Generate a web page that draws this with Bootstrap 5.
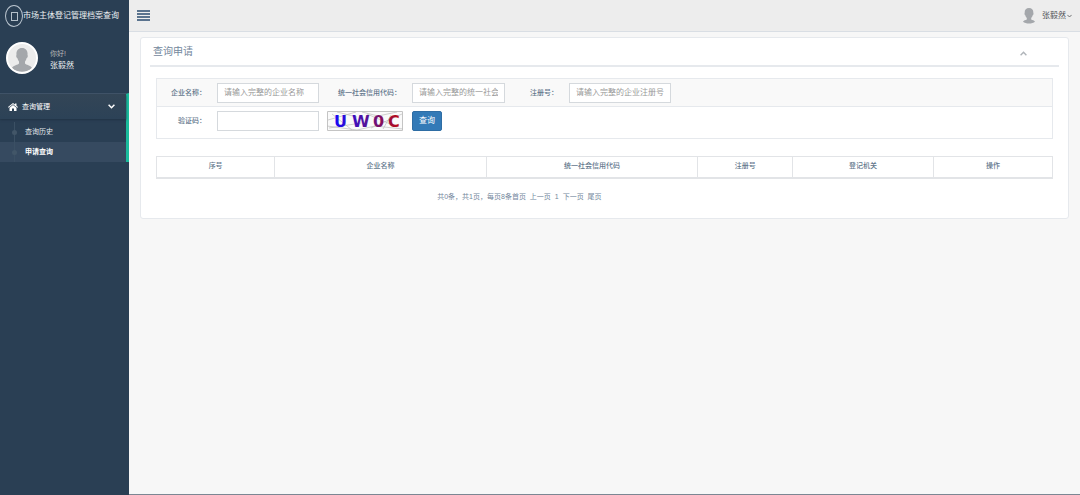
<!DOCTYPE html>
<html lang="zh-CN">
<head>
<meta charset="utf-8">
<meta name="viewport" content="width=device-width, initial-scale=1">
<title>市场主体登记管理档案查询</title>
<link href="https://cdn.jsdelivr.net/npm/bootstrap@5.3.0/dist/css/bootstrap.min.css" rel="stylesheet">
<style>
body{font-family:"Liberation Sans","Noto Sans CJK SC",sans-serif;font-size:7px;line-height:12px;color:#73879c;background:#f7f7f7}
a{color:inherit;text-decoration:none}
.side{width:129px;background:#2a3f54;color:#ecf0f1}
.brand{height:32px;font-size:8px;padding-left:5px;white-space:nowrap}
.logo-ring{width:18px;height:22px;border:1px solid #b9c4ce;border-radius:50%;flex:none}
.logo-ring span{width:7px;height:9px;border:1px solid #b4c0ca}
.profile{padding:10px 6px 0;height:61px;gap:12px}
.avatar{width:32px;height:32px;border-radius:50%;border:2px solid #fff;background:#ececec;flex:none}
.hello{color:#bab8b8}
.person{font-size:8px}
.who{padding-top:6px}
.menu-group{border-right:3px solid #1abb9c;border-top:1px solid #42566a}
.menu-head{height:25px;padding:0 11px 0 8px;background:linear-gradient(#334556,#2c4257);box-shadow:0 1px 2px #213345;color:#fff}
.sub{padding-top:3px}
.sub a{height:20px;padding-left:25px;position:relative;color:#e2e7eb}
.sub a::before{content:"";position:absolute;left:14px;top:0;bottom:0;border-left:1px solid #3b5064}
.sub a::after{content:"";position:absolute;left:12px;top:8px;width:5px;height:5px;border-radius:50%;background:#425668}
.sub a.active{background:#364a60;color:#fff;font-weight:bold}
.content-side{border-bottom:1px solid #7b8793}
.topbar{height:32px;background:#ededed;border-bottom:1px solid #d9dee4;padding:0 8px}
.plain-btn{background:none;border:0;padding:0;line-height:0}
.user-btn{background:none;border:0;padding:0;gap:1px;font-size:8px;color:#515356;line-height:12px}
.user-btn .face{margin-right:6px}
.panel{margin:5px 11px 0 11px;border:1px solid #e6e9ed;border-radius:3px;padding:0 9px 15px;background:#fff}
.panel-title{height:29px;border-bottom:2px solid #e6e9ed}
.panel-title h1{font-size:10px;line-height:14px;padding-left:3px}
.panel-main{padding:11px 6px 0}
.query{border:1px solid #e6e9ed}
.query-row{height:31px;padding-bottom:4px}
.query-row:first-child{height:28px;padding-bottom:0;background:#f9f9f9;border-bottom:1px solid #e6e9ed}
.query label{width:49px;text-align:right;margin-right:11px;font-weight:500;color:#63778c;white-space:nowrap}
.query label.l-code{width:82px}
.query label.l-reg{width:53px}
.query input{width:102px;height:20px;border:1px solid #d5d9dd;border-radius:0;padding:0 6px;font-size:8px;line-height:12px;color:#555}
.query input.in-code{width:93px}
.query input::placeholder{color:#999}
.captcha{margin:0 9px 0 8px}
.go{width:30px;height:20px;font-size:8px;line-height:12px;padding:0;border-radius:2px;background:#337ab7;border-color:#2e6da4;color:#fff}
.result{margin-top:17px;table-layout:fixed;border-color:#e2e4e7;color:#73879c}
.result th{height:21px;padding:0 0 2px;font-weight:500;text-align:center;vertical-align:middle;color:#63778c;border:1px solid #e2e4e7;border-bottom-width:2px}
.pages{margin-top:12px;padding-left:31.35%}
.pages a+a{margin-left:2px}
</style>
</head>
<body>
<div class="d-flex min-vh-100">
  <aside class="side flex-shrink-0">
    <a href="#" class="brand d-flex align-items-center"><span class="logo-ring d-flex align-items-center justify-content-center"><span></span></span>市场主体登记管理档案查询</a>
    <div class="profile d-flex align-items-start">
      <svg class="avatar" viewBox="0 0 28 28" aria-hidden="true"><path fill="#a4a7ab" d="M14 4c4 0 6 3 5.500 7 .8 1-.1 2.800-1 3.300-.3 1.800-1 2.500-1.500 3.200v2c1 1.600 5.500 1.600 7 4.500-5 5-15 5-20 0 1.500-2.900 6-2.900 7-4.500v-2c-.8-.9-1.300-1.900-1.500-3.200-1.100-.5-1.700-2.300-1-3.300C8 7 10 4 14 4z"/></svg>
      <div class="who"><div class="hello">你好!</div><div class="person">张毅然</div></div>
    </div>
    <nav class="menu-group">
      <a href="#" class="menu-head d-flex align-items-center">
        <svg width="10" height="8" viewBox="0 0 20 16" fill="#fff" aria-hidden="true"><path d="M10 0 0 8l1 1.500L10 2.500l9 7L20 8l-3-2.500V1h-3v2.200zM10 4 3 9.500V16h5v-5h4v5h5V9.500z"/></svg>
        <span class="ms-1 flex-fill">查询管理</span>
        <svg width="7" height="5" viewBox="0 0 7 5" fill="none" stroke="#fff" stroke-width="1.500" aria-hidden="true"><path d="m.6.8 2.900 2.900L6.400.8"/></svg>
      </a>
      <div class="sub">
        <a href="#" class="d-flex align-items-center">查询历史</a>
        <a href="#" class="active d-flex align-items-center">申请查询</a>
      </div>
    </nav>
  </aside>
  <div class="content-side flex-fill">
    <header class="topbar d-flex align-items-center justify-content-between">
      <button type="button" class="plain-btn" aria-label="菜单"><svg width="14" height="11" viewBox="0 0 14 11" fill="#5a738e"><path d="M0 0h13v2H0zM0 3h13v2H0zM0 6h13v2H0zM0 9h13v2H0z"/></svg></button>
      <button type="button" class="user-btn d-flex align-items-center">
        <svg class="face" width="12" height="16" viewBox="0 0 12 16" fill="#a4a7ab" aria-hidden="true"><path d="M6 0c3 0 4.600 2 4.300 5 .5.800 0 2-.6 2.300C9.400 8.600 8.600 9.500 8.200 10v1.500c1 .6 3.400.8 3.800 2.300-2.500 2.400-9.500 2.400-12 0 .4-1.500 2.800-1.700 3.800-2.300V10C3.400 9.500 2.600 8.600 2.300 7.300 1.700 7 1.200 5.800 1.700 5 1.400 2 3 0 6 0z"/></svg>张毅然
        <svg width="5" height="4" viewBox="0 0 5 4" fill="none" stroke="#515356" stroke-width=".8" aria-hidden="true"><path d="m.4.900 2.100 2.100L4.600.9"/></svg>
      </button>
    </header>
    <main class="panel">
      <div class="panel-title d-flex align-items-center justify-content-between">
        <h1 class="m-0 fw-normal">查询申请</h1>
        <button type="button" class="plain-btn me-4 px-2 pt-1" aria-label="收起"><svg width="7" height="5" viewBox="0 0 7 5" fill="none" stroke="#afb4b9" stroke-width="1.400"><path d="m.6 4.200 2.900-2.900 2.900 2.900"/></svg></button>
      </div>
      <div class="panel-main">
        <form class="query">
          <div class="query-row d-flex align-items-center">
            <label for="company">企业名称：</label><input id="company" type="text" placeholder="请输入完整的企业名称">
            <label class="l-code" for="code">统一社会信用代码：</label><input class="in-code" id="code" type="text" placeholder="请输入完整的统一社会信用代码">
            <label class="l-reg" for="reg">注册号：</label><input id="reg" type="text" placeholder="请输入完整的企业注册号">
          </div>
          <div class="query-row d-flex align-items-center">
            <label for="verify">验证码：</label><input id="verify" type="text">
            <svg class="captcha" width="76" height="20" viewBox="0 0 76 20" role="img" aria-label="验证码图片">
              <defs><linearGradient id="ink" gradientUnits="userSpaceOnUse" x1="8" y1="0" x2="75" y2="0"><stop offset="0" stop-color="#1808f5"/><stop offset=".5" stop-color="#5a1292"/><stop offset="1" stop-color="#c40808"/></linearGradient></defs>
              <path fill="#fafafa" stroke="#c4c4c4" d="M.5.5h75v19H.5z"/>
              <path fill="none" stroke="#bbb" stroke-width=".7" d="M0 15l30 4 18-4 28 3M1 9l28-8M10 1l20 5M2 17l32-5M40 3l30 13M44 17 75 3M35 1l16 4L70 1M5 3l20 16M56 18l8-14"/>
              <g font-family="DejaVu Sans" font-size="16" font-weight="bold" fill="url(#ink)"><text x="7" y="16">U</text><text x="25" y="16">W</text><text x="46" y="16">0</text><text x="61" y="16">C</text></g>
            </svg>
            <button type="submit" class="btn go">查询</button>
          </div>
        </form>
        <table class="result table mb-0">
          <colgroup><col style="width:13.2%"><col style="width:23.600%"><col style="width:23.600%"><col style="width:10.600%"><col style="width:15.700%"><col style="width:13.300%"></colgroup>
          <thead><tr><th>序号</th><th>企业名称</th><th>统一社会信用代码</th><th>注册号</th><th>登记机关</th><th>操作</th></tr></thead>
        </table>
        <div class="pages">共0条，共1页，每页8条<a href="#">首页</a> <a href="#">上一页</a> <a href="#">1</a> <a href="#">下一页</a> <a href="#">尾页</a></div>
      </div>
    </main>
  </div>
</div>
<script src="https://cdn.jsdelivr.net/npm/bootstrap@5.3.0/dist/js/bootstrap.bundle.min.js"></script>
</body>
</html>
